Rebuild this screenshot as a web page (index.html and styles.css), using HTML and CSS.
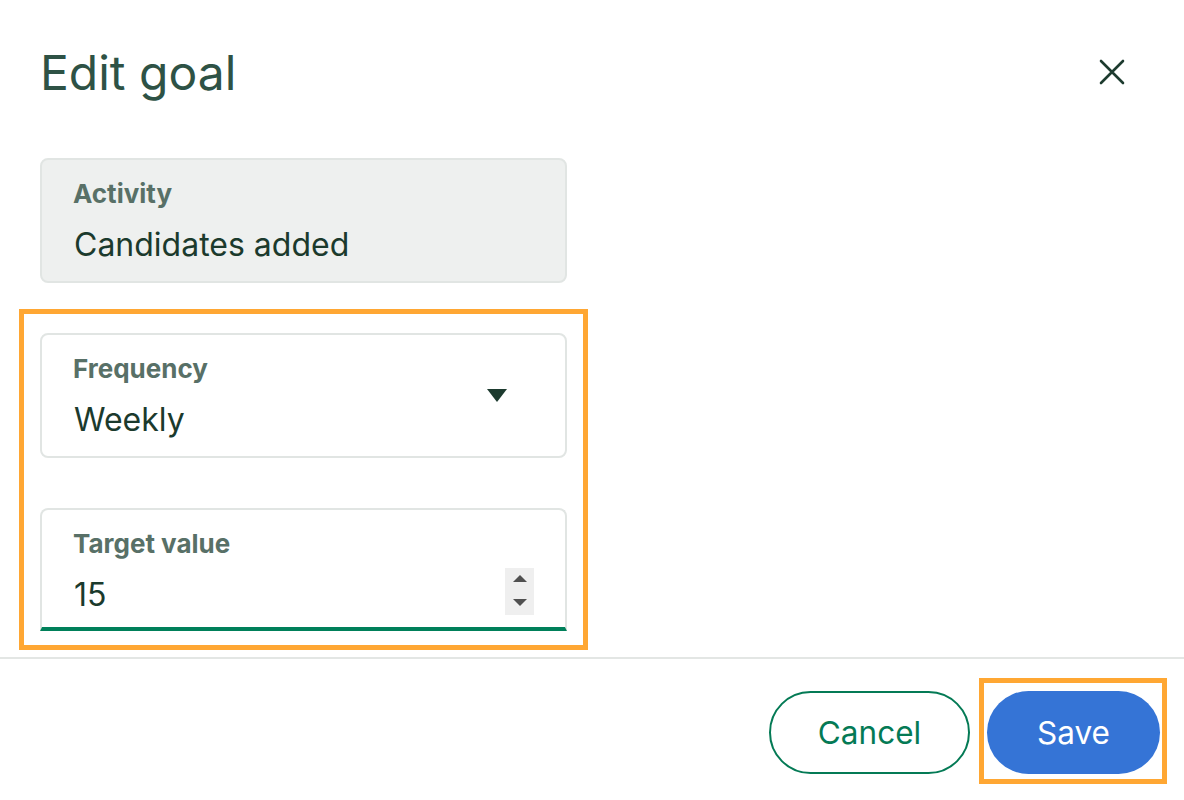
FILE: index.html
```html
<!DOCTYPE html>
<html lang="en">
<head>
<meta charset="utf-8">
<title>Edit goal</title>
<link rel="stylesheet" href="styles.css">
</head>
<body>
<div class="dialog">
  <header class="dialog-header">
    <h1 class="title">Edit goal</h1>
    <button class="close" aria-label="Close">
      <svg width="26" height="26" viewBox="0 0 26 26"><path d="M2 2 L24 24 M24 2 L2 24" stroke="#1d3b2f" stroke-width="2.6" stroke-linecap="round"/></svg>
    </button>
  </header>
  <div class="dialog-body">
    <div class="field field-disabled">
      <span class="field-label">Activity</span>
      <span class="field-value">Candidates added</span>
    </div>
    <div class="highlight highlight-fields">
      <div class="field field-select">
        <div class="field-text">
          <span class="field-label">Frequency</span>
          <span class="field-value">Weekly</span>
        </div>
        <span class="caret"></span>
      </div>
      <div class="field field-number">
        <div class="field-text">
          <span class="field-label">Target value</span>
          <span class="field-value">15</span>
        </div>
        <div class="spinner">
          <span class="spin-up"></span>
          <span class="spin-down"></span>
        </div>
      </div>
    </div>
  </div>
  <footer class="dialog-footer">
    <button class="btn btn-secondary">Cancel</button>
    <div class="highlight highlight-save">
      <button class="btn btn-primary">Save</button>
    </div>
  </footer>
</div>
</body>
</html>
```

FILE: styles.css
```css
* { box-sizing: border-box; }
html, body { margin: 0; padding: 0; background: #fff; }
body { font-family: Inter, "Liberation Sans", sans-serif; color: #1b3a2d; }

.dialog { width: 1184px; height: 800px; display: flex; flex-direction: column; }

.dialog-header {
  display: flex; align-items: flex-start; justify-content: space-between;
  padding: 45px 59px 0 40px; height: 158px;
}
.title {
  margin: 0; font-size: 48px; font-weight: 400; line-height: 56px; color: #2e5245;
}
.close {
  border: 0; background: none; padding: 0; margin-top: 14px; width: 26px; height: 26px;
  display: flex; cursor: pointer;
}

.dialog-body { padding: 0 0 0 40px; width: 608px; display: flex; flex-direction: column; }

.field {
  width: 527px; height: 125px; border: 2px solid #e1e5e3; border-radius: 8px;
  padding: 20px 32px 0 32px; display: flex; align-items: flex-start;
}
.field-text { display: flex; flex-direction: column; flex: 1; }
.field-disabled { background: #eef0ef; flex-direction: column; }
.field-label { font-size: 26px; font-weight: 650; line-height: 28px; color: #587067; margin-left: -1px; }
.field-value { font-size: 32px; line-height: 36px; margin-top: 19px; color: #1b3a2d; }

.highlight { border: 5px solid #ffa733; }
.highlight-fields {
  margin: 26px 0 0 -21px; width: 569px;
  padding: 19px 16px 14px 16px; display: flex; flex-direction: column; gap: 50px;
}
.caret {
  width: 0; height: 0; border-left: 10px solid transparent; border-right: 10px solid transparent;
  border-top: 13px solid #1d3b2f; margin-right: 26px; margin-top: 34px;
}
.field-number { border-bottom: 4px solid #00805a; height: 123px; border-radius: 8px 8px 0 0; padding-right: 31px; }
.spinner {
  width: 29px; height: 47px; background: #efefef; margin-top: 38px;
  display: flex; flex-direction: column; align-items: center; justify-content: space-between;
  padding: 7px 0 9px;
}
.spin-up { width: 0; height: 0; border-left: 7px solid transparent; border-right: 7px solid transparent; border-bottom: 7px solid #505050; }
.spin-down { width: 0; height: 0; border-left: 7px solid transparent; border-right: 7px solid transparent; border-top: 7px solid #505050; }

.dialog-footer {
  margin-top: 7px; border-top: 2px solid #e3e6e4;
  display: flex; justify-content: flex-end; align-items: flex-start;
  padding: 19px 17px 0 0; gap: 9px;
}
.btn {
  height: 83px; border-radius: 42px; font-family: inherit; font-size: 31.5px; font-weight: 400;
  cursor: pointer;
}
.btn-secondary {
  width: 201px; background: #fff; border: 2px solid #047a55; color: #047a55; margin-top: 13px;
}
.highlight-save { padding: 8px 2px 5px 3px; }
.btn-primary { width: 173px; background: #3574d6; border: 0; color: #fff; }
```
